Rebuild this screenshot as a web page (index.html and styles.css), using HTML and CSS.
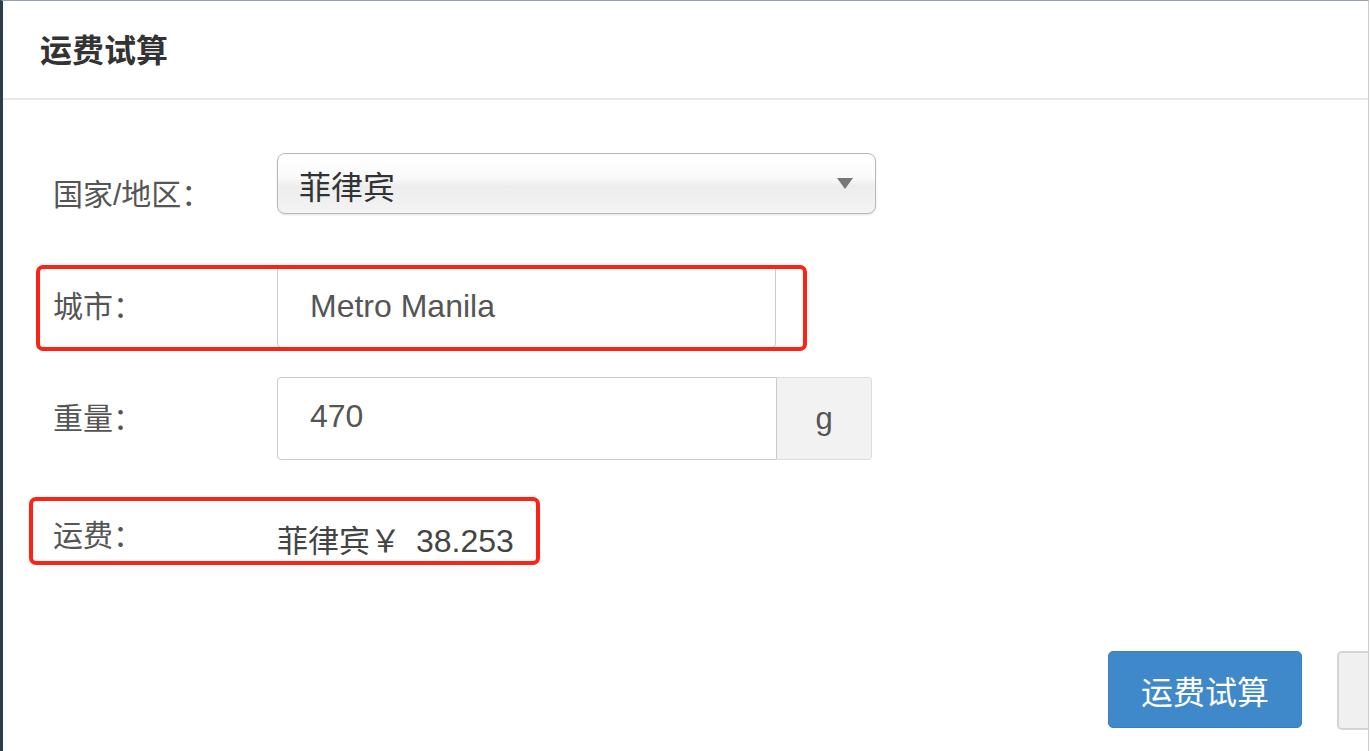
FILE: index.html
```html
<!DOCTYPE html>
<html lang="zh-CN">
<head>
<meta charset="utf-8">
<title>运费试算</title>
<link rel="stylesheet" href="styles.css">
</head>
<body>
<div class="frame">
  <div class="modal">
    <div class="modal-header">
      <h4 class="modal-title">运费试算</h4>
    </div>
    <div class="modal-body">
      <div class="row row-country">
        <label class="label label-top">国家/地区：</label>
        <div class="select">
          <span class="select-text">菲律宾</span>
          <span class="caret"></span>
        </div>
      </div>
      <div class="row row-city">
        <label class="label">城市：</label>
        <div class="input city-input">Metro Manila</div>
      </div>
      <div class="row row-weight">
        <label class="label">重量：</label>
        <div class="input-group">
          <div class="input weight-input">470</div>
          <div class="addon">g</div>
        </div>
      </div>
      <div class="row row-fee">
        <label class="label">运费：</label>
        <div class="value">菲律宾￥<span class="amount">38.253</span></div>
      </div>
      <div class="mark mark-city"></div>
      <div class="mark mark-fee"></div>
    </div>
    <div class="modal-footer">
      <button class="btn btn-primary">运费试算</button>
      <button class="btn btn-default" aria-label="关闭"></button>
    </div>
  </div>
</div>
</body>
</html>
```

FILE: styles.css
```css
* { box-sizing: border-box; }
html, body {
  margin: 0;
  padding: 0;
  background: #ffffff;
  overflow: hidden;
}
body {
  font-family: "Liberation Sans", "Noto Sans CJK SC", sans-serif;
}
.frame {
  width: 1369px;
  height: 751px;
  border-left: 3px solid #2f3c4b;
  border-top: 1px solid #93a3b1;
  border-right: 1px solid #cccccc;
  overflow: hidden;
  background: #ffffff;
}
.modal {
  width: 1365px;
}
.modal-header {
  height: 99px;
  padding: 34px 0 0 37px;
  border-bottom: 2px solid #e8e8e8;
}
.modal-title {
  margin: 0;
  font-size: 32px;
  line-height: 32px;
  font-weight: bold;
  color: #333333;
  font-family: "Liberation Sans", "Noto Sans CJK SC", sans-serif;
}
.modal-body {
  position: relative;
  padding: 53px 0 0 50px;
}
.row {
  display: flex;
  align-items: center;
}
.label {
  width: 224px;
  flex-shrink: 0;
  font-size: 30px;
  line-height: 30px;
  color: #555555;
  white-space: nowrap;
}
.row-country {
  height: 61px;
  align-items: flex-start;
}
.label-top {
  padding-top: 27px;
}
.select {
  width: 599px;
  height: 61px;
  border: 1px solid #b8b8b8;
  border-radius: 8px;
  background: linear-gradient(#ffffff 0%, #fafafa 40%, #ededed 55%, #f3f3f3 100%);
  box-shadow: 0 1px 2px rgba(0,0,0,0.12);
  display: flex;
  align-items: center;
  justify-content: space-between;
  padding: 0 22px 0 21px;
}
.select-text {
  font-size: 32px;
  color: #333333;
  position: relative;
  top: 1px;
}
.caret {
  width: 0;
  height: 0;
  border-left: 8px solid transparent;
  border-right: 8px solid transparent;
  border-top: 11px solid #777777;
}
.row-city {
  margin-top: 51px;
  height: 83px;
}
.input {
  height: 83px;
  border: 1px solid #cccccc;
  border-radius: 4px;
  padding-left: 32px;
  display: flex;
  align-items: center;
  font-size: 32px;
  color: #555555;
  background: #ffffff;
}
.city-input {
  width: 499px;
}
.row-weight {
  margin-top: 29px;
  height: 83px;
}
.input-group {
  display: flex;
}
.weight-input {
  width: 500px;
  border-radius: 4px 0 0 4px;
  padding-bottom: 4px;
}
.addon {
  width: 95px;
  height: 83px;
  background: #f2f2f2;
  border: 1px solid #dddddd;
  border-left: none;
  border-radius: 0 4px 4px 0;
  display: flex;
  align-items: center;
  justify-content: center;
  font-size: 31px;
  color: #555555;
}
.row-fee {
  margin-top: 56px;
  height: 40px;
}
.value {
  font-size: 31px;
  color: #444444;
  position: relative;
  top: 2px;
  white-space: nowrap;
}
.amount {
  font-size: 32px;
  margin-left: 15px;
}
.mark {
  position: absolute;
  border: 4px solid #ff2114;
  border-radius: 7px;
}
.mark-city {
  left: 33px;
  top: 165px;
  width: 771px;
  height: 86px;
}
.mark-fee {
  left: 26px;
  top: 397px;
  width: 511px;
  height: 68px;
}
.modal-footer {
  display: flex;
  gap: 35px;
  padding: 95px 0 0 1105px;
}
.btn {
  flex-shrink: 0;
  height: 77px;
  border-radius: 5px;
  font-size: 32px;
  font-family: "Liberation Sans", "Noto Sans CJK SC", sans-serif;
  padding: 0;
}
.btn-primary {
  width: 194px;
  background: #3f88c9;
  border: 1px solid #3a80bf;
  color: #ffffff;
}
.btn-default {
  width: 150px;
  height: 79px;
  background: #f0f0f0;
  border: 2px solid #d4d4d4;
  color: #333333;
}
```
